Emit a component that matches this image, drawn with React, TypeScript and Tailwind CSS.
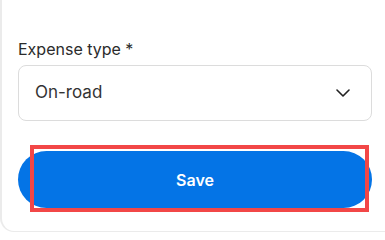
import React from "react";

export default function App() {
  return (
    <div
      className="w-[385px] h-[234px] bg-white overflow-hidden"
      style={{ fontFamily: "Inter, 'Noto Sans', sans-serif" }}
    >
      <div className="relative h-[232px] border-l-2 border-b border-[#ebebeb] rounded-bl-[14px] pl-[16px] pr-[13px] pt-[37px]">
        <label className="block text-[16px] leading-[24px] text-[#2b2b2b] mb-[4px]">
          Expense type *
        </label>
        <div className="flex items-center justify-between h-[56px] border border-[#dcdcdc] rounded-[8px] pl-[16px] pr-[21px]">
          <span className="text-[17px] text-[#333333]">On-road</span>
          <svg width="14" height="8" viewBox="0 0 14 8" fill="none">
            <path
              d="M1 1l6 6 6-6"
              stroke="#222"
              strokeWidth="1.6"
              strokeLinecap="round"
              strokeLinejoin="round"
            />
          </svg>
        </div>
        <button className="mt-[30px] w-full h-[57px] rounded-full bg-[#0474e6] text-white text-[16px] font-semibold">
          Save
        </button>
        <div className="absolute left-[28px] top-[145px] w-[339px] h-[67px] border-[4px] border-[#f24747] pointer-events-none" />
      </div>
    </div>
  );
}
